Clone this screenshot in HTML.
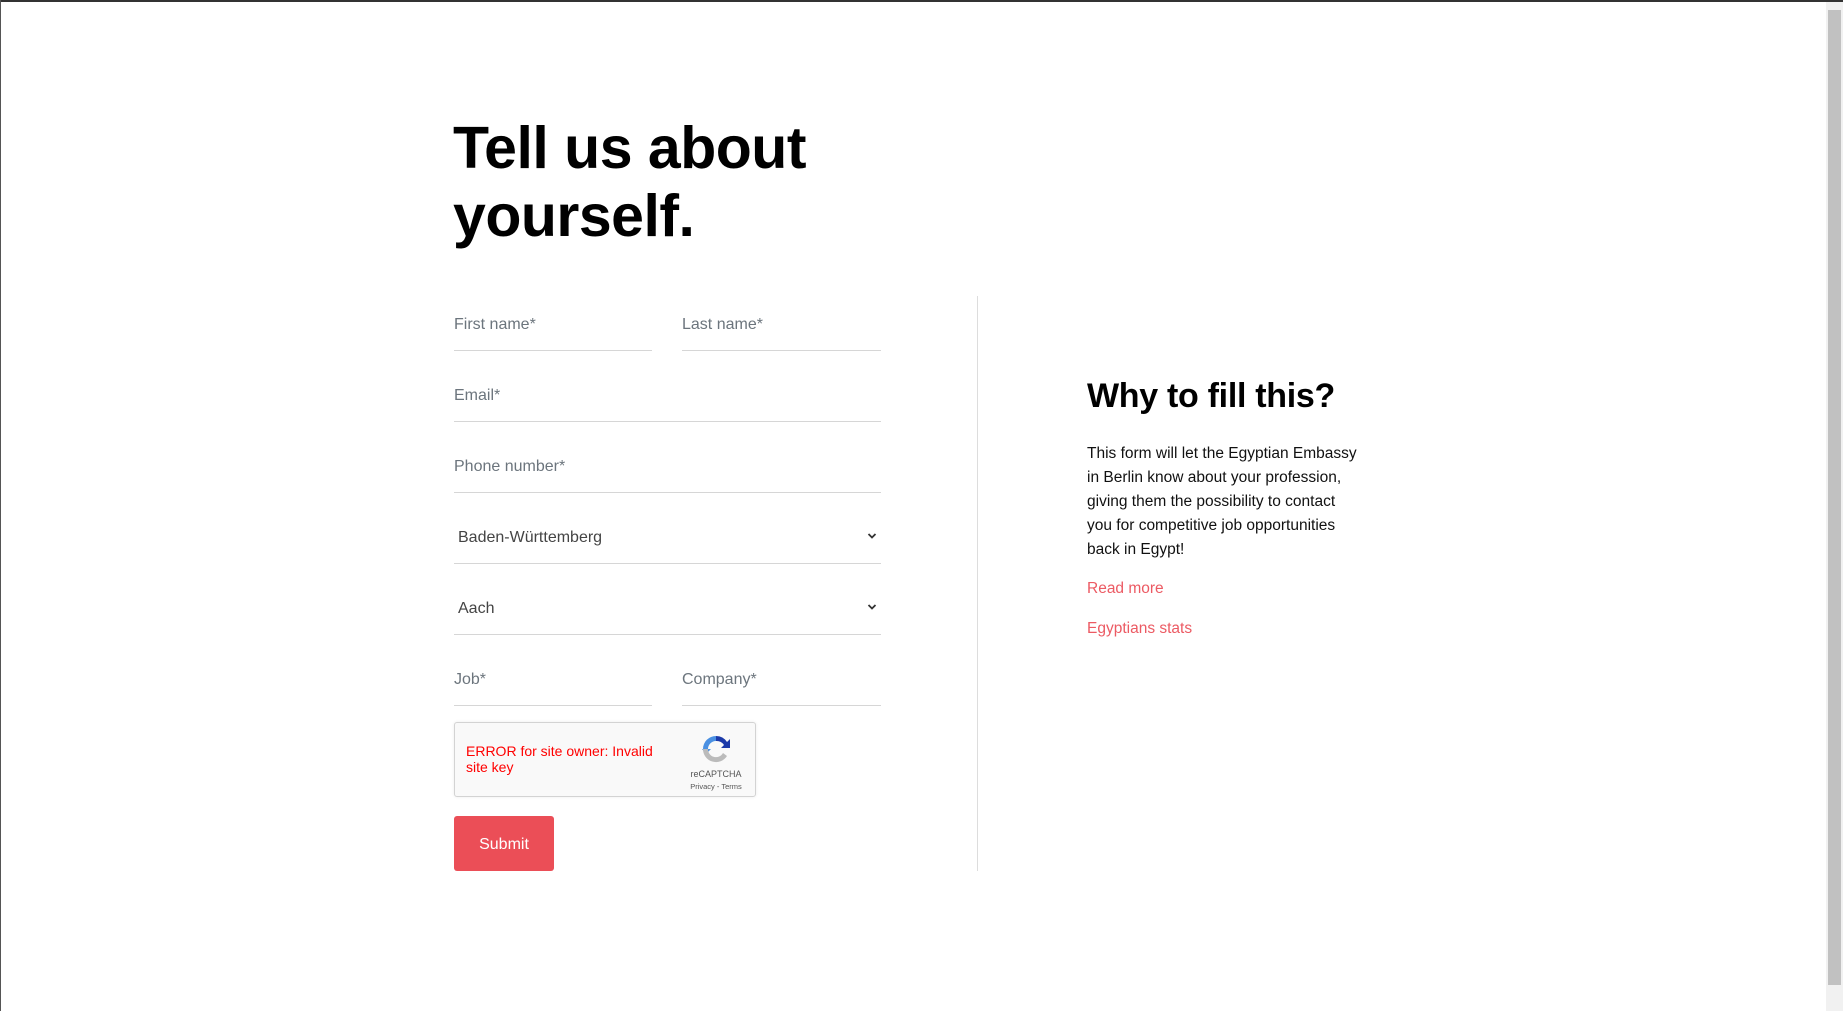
<!DOCTYPE html>
<html><head><meta charset="utf-8"><style>
*{box-sizing:border-box;margin:0;padding:0}
html,body{width:1843px;height:1011px;overflow:hidden;background:#fff;font-family:"Liberation Sans",sans-serif}
.top{position:absolute;left:0;top:0;width:1843px;height:2px;background:#333}
.leftb{position:absolute;left:0;top:0;width:1px;height:1011px;background:#555}
.sb{position:absolute;right:0;top:2px;width:17px;height:1009px;background:#f1f1f1}
.thumb{position:absolute;left:2px;top:8px;width:13px;height:975px;background:#c1c1c1}
h1{position:absolute;left:453px;top:114px;font-size:59px;line-height:68px;font-weight:700;color:#000;letter-spacing:-0.5px}
.f{position:absolute;border-bottom:1.5px solid #d6d6d6;height:36px;color:#6c757d;font-size:16px;line-height:20px}
.sel{color:#444}
.chev{position:absolute;right:4px;top:4px}
.div{position:absolute;left:977px;top:296px;width:1px;height:575px;background:#ddd}
.cap{position:absolute;left:454px;top:722px;width:302px;height:75px;background:#f9f9f9;border:1px solid #d3d3d3;border-radius:3px;box-shadow:0 0 3px rgba(0,0,0,.08)}
.err{position:absolute;left:11px;top:20px;color:#f00;font-size:14px;line-height:16px;width:190px}
.btn{position:absolute;left:454px;top:816px;width:100px;height:55px;background:#eb4e57;border-radius:3px;color:#fff;font-size:16px;text-align:center;line-height:57px}
h2{position:absolute;left:1087px;top:377px;font-size:34px;font-weight:700;color:#000;letter-spacing:-0.3px}
.p{position:absolute;left:1087px;top:442px;white-space:nowrap;font-size:15.5px;line-height:24px;color:#111}
.a{position:absolute;left:1087px;color:#ec5a63;font-size:15.5px}
</style></head><body>
<div class="top"></div><div class="leftb"></div>
<div class="sb"><div class="thumb"></div></div>
<h1>Tell us about<br>yourself.</h1>
<div class="f" style="left:454px;top:315px;width:198px">First name*</div>
<div class="f" style="left:682px;top:315px;width:199px">Last name*</div>
<div class="f" style="left:454px;top:386px;width:427px">Email*</div>
<div class="f" style="left:454px;top:457px;width:427px">Phone number*</div>
<div class="f sel" style="left:454px;top:528px;width:427px;padding-left:4px">Baden-Württemberg<svg class="chev" width="10" height="8" viewBox="0 0 10 8"><path d="M1.5 2l3.5 3.5L8.5 2" stroke="#333" stroke-width="1.8" fill="none"/></svg></div>
<div class="f sel" style="left:454px;top:599px;width:427px;padding-left:4px">Aach<svg class="chev" width="10" height="8" viewBox="0 0 10 8"><path d="M1.5 2l3.5 3.5L8.5 2" stroke="#333" stroke-width="1.8" fill="none"/></svg></div>
<div class="f" style="left:454px;top:670px;width:198px">Job*</div>
<div class="f" style="left:682px;top:670px;width:199px">Company*</div>
<div class="cap"><div class="err">ERROR for site owner: Invalid site key</div>
<svg style="position:absolute;left:245px;top:10px" width="32" height="32" viewBox="0 0 32 32"><path d="M16 3a13 13 0 0 1 11 6l3-3v9h-9l3-3a9 9 0 0 0-8-4z" fill="#1c3aa9"/><path d="M3 16A13 13 0 0 1 16 3v5a8 8 0 0 0-8 8l3 0-5 5-4-5z" fill="#4a90e2"/><path d="M8 16a8 8 0 0 0 15 4l4 3A13 13 0 0 1 3 16z" fill="#bbb"/></svg>
<div style="position:absolute;left:221px;top:46px;width:80px;text-align:center;font-size:9px;color:#555">reCAPTCHA</div>
<div style="position:absolute;left:221px;top:59px;width:80px;text-align:center;font-size:7.5px;color:#555">Privacy - Terms</div></div>
<div class="btn">Submit</div>
<div class="div"></div>
<h2>Why to fill this?</h2>
<div class="p">This form will let the Egyptian Embassy<br>in Berlin know about your profession,<br>giving them the possibility to contact<br>you for competitive job opportunities<br>back in Egypt!</div>
<div class="a" style="top:580px">Read more</div>
<div class="a" style="top:620px">Egyptians stats</div>
</body></html>
